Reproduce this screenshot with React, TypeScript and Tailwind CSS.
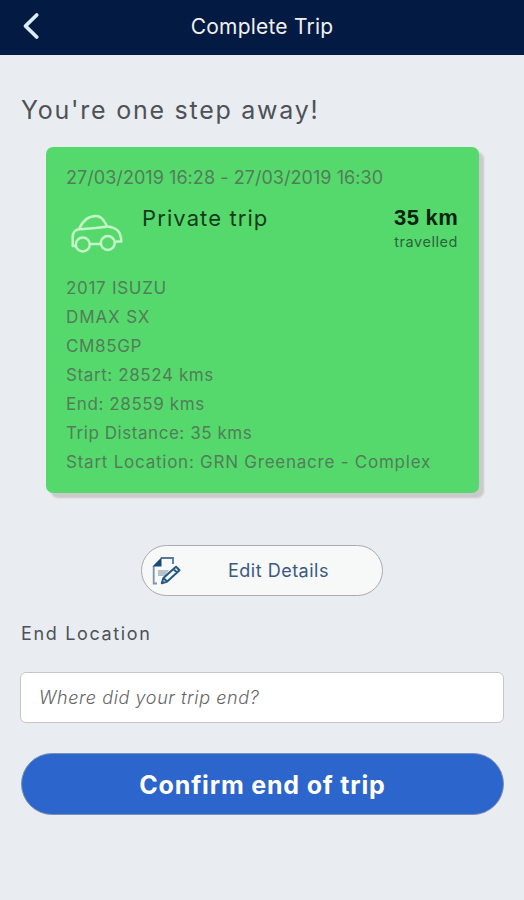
const details = [
  { text: "2017 ISUZU", tracking: "tracking-[0.7px]" },
  { text: "DMAX SX", tracking: "tracking-[0.9px]" },
  { text: "CM85GP", tracking: "tracking-[0.65px]" },
  { text: "Start: 28524 kms", tracking: "tracking-[0.6px]" },
  { text: "End: 28559 kms", tracking: "tracking-[0.6px]" },
  { text: "Trip Distance: 35 kms", tracking: "tracking-[0.55px]" },
  { text: "Start Location: GRN Greenacre - Complex", tracking: "tracking-[0.76px]" },
]

function CarIcon() {
  return (
    <svg
      className="block h-[42px] w-[54px]"
      viewBox="0 0 54 42"
      fill="none"
      stroke="#c4f5c6"
      strokeWidth="2.5"
      strokeLinejoin="round"
    >
      <path d="M6.5 33H2.7V24C2.7 19.5 5 17 9 16.3C12.5 8 18.5 3 26 3C31.5 3 34 7.5 37.3 13.6C46 14.5 51 18 51.3 28.5H45.8" />
      <path d="M9 16.3C18 15.3 28 15.3 37.3 13.6M19.5 31H30" />
      <circle cx="12.8" cy="31.5" r="7" />
      <circle cx="37.8" cy="30" r="7" />
    </svg>
  )
}

function EditIcon() {
  return (
    <svg className="block size-[30px]" viewBox="0 0 30 30" fill="none">
      <path d="M10 2H22V8" stroke="#587799" strokeWidth="1.8" />
      <path d="M2.7 10V27.5H6" stroke="#7f93aa" strokeWidth="1.8" />
      <path d="M1.5 10.5L10.5 1.2V10.5Z" fill="#174a7c" />
      <path d="M7 14H18L14 20H7Z" fill="#b8c3c8" />
      <path
        d="M10.8 27.3L12.4 22L25 10.8L28.5 14.2L16.2 25.5ZM12.4 22L16.2 25.5M22.5 13L26 16.5"
        fill="#f7f8f8"
        stroke="#245782"
        strokeWidth="2"
        strokeLinejoin="round"
      />
    </svg>
  )
}

function TripCard() {
  return (
    <section className="ml-[25px] mr-6 mt-[18.5px] h-[346px] rounded-[7px] bg-[#56d96c] px-5 pt-[19px] shadow-[5px_5px_2px_#cacaca]">
      <p className="h-6 whitespace-nowrap text-[18px] leading-6 tracking-[0.05px] text-[#517d59]">
        27/03/2019 16:28 - 27/03/2019 16:30
      </p>
      <div className="mt-4 flex h-[68px]">
        <div className="w-[76px] pl-1 pt-[7px]">
          <CarIcon />
        </div>
        <h2 className="whitespace-nowrap text-[22px] leading-[25px] tracking-[1.1px] text-[#153b1c]">Private trip</h2>
        <div className="ml-auto pr-px text-right">
          <p className="font-['Liberation_Sans',sans-serif] text-[22px] font-bold leading-[23px] tracking-[0.3px] text-[#0d2412]">
            35 km
          </p>
          <p className="text-[14.5px] leading-[25px] tracking-[0.55px] text-[#29643a]">travelled</p>
        </div>
      </div>
      <ul>
        {details.map((item) => (
          <li key={item.text} className={`h-[29.15px] whitespace-nowrap text-[17px] leading-[29px] text-[#517d59] ${item.tracking}`}>
            {item.text}
          </li>
        ))}
      </ul>
    </section>
  )
}

export default function App() {
  return (
    <div className="h-[900px] w-[524px] overflow-hidden bg-[#e9edf1] font-['Inter',sans-serif] font-normal">
      <header className="grid h-[55px] grid-cols-[60px_1fr_60px] items-center bg-[#031b43]">
        <button className="-mt-1 pl-[22px]" aria-label="Back">
          <svg className="block h-[28px] w-[18px]" viewBox="0 0 18 28" fill="none">
            <path d="M14.7 3L3.5 14L14.7 25" stroke="#dcecf8" strokeWidth="3.8" strokeLinecap="round" strokeLinejoin="round" />
          </svg>
        </button>
        <h1 className="-mt-px text-center text-[21px] leading-[52px] tracking-[0.2px] text-[#f1f0ee]">Complete Trip</h1>
      </header>
      <main className="px-[21px] pt-[37px]">
        <p className="h-[36px] whitespace-nowrap text-[25px] leading-[36px] tracking-[1.75px] text-[#4e5256]">You're one step away!</p>
        <TripCard />
        <button className="mx-auto mt-[52.5px] flex h-[51px] w-[242px] items-center rounded-full border border-[#aaa] bg-[#f7f8f8] pl-[9px]">
          <EditIcon />
          <span className="ml-[47px] whitespace-nowrap text-[18px] tracking-[0.5px] text-[#3b5981]">Edit Details</span>
        </button>
        <label htmlFor="end-location" className="mt-[26px] block h-6 text-[18px] leading-6 tracking-[1.65px] text-[#4e5256]">
          End Location
        </label>
        <input
          id="end-location"
          type="text"
          placeholder="Where did your trip end?"
          className="-mx-px mt-[26px] block h-[51px] w-[484px] rounded-[6px] border border-[#c4c6c8] bg-white px-[18px] text-[18px] font-light italic tracking-[0.6px] placeholder:text-[#656565]"
        />
        <button className="mt-[30px] block h-[62px] w-[483px] rounded-full border border-[#7d91b5] bg-[#2c65cb] pt-[3px] text-[25px] font-bold tracking-[0.82px] text-white">
          Confirm end of trip
        </button>
      </main>
    </div>
  )
}
